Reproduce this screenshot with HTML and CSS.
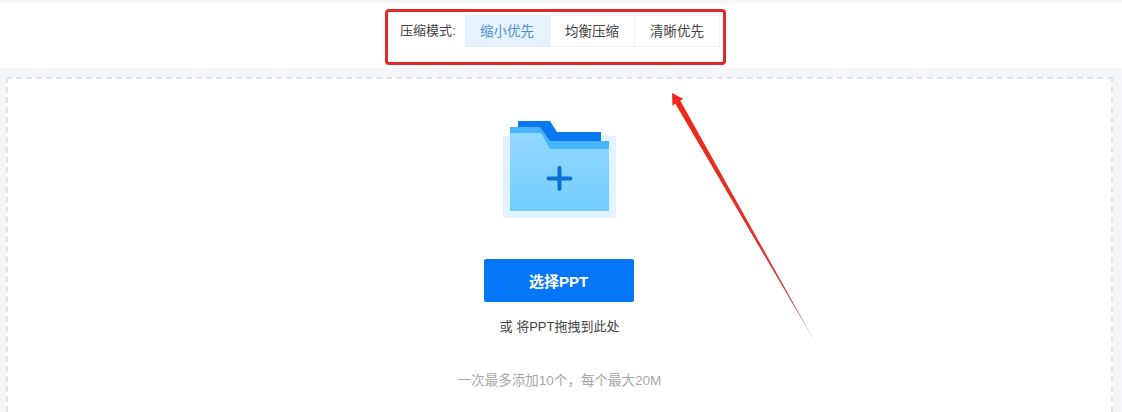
FILE: index.html
```html
<!DOCTYPE html>
<html lang="zh-CN">
<head>
<meta charset="utf-8">
<title>压缩PPT</title>
<link rel="stylesheet" href="styles.css">
</head>
<body>
<div class="page">
  <header class="toolbar">
    <span class="mode-label">压缩模式:</span>
    <div class="tabs">
      <span class="tab active">缩小优先</span>
      <span class="tab">均衡压缩</span>
      <span class="tab">清晰优先</span>
    </div>
  </header>
  <main class="drop">
    <svg class="folder" width="113" height="98" viewBox="0 0 113 98">
      <defs>
        <linearGradient id="front" x1="0" y1="0" x2="0" y2="1">
          <stop offset="0" stop-color="#93d8ff"/>
          <stop offset="1" stop-color="#72cdff"/>
        </linearGradient>
      </defs>
      <rect x="0" y="16" width="113" height="82" fill="#e3f3fd"/>
      <path d="M15 1H47L54 12H98V25H15Z" fill="#0a78ee"/>
      <path d="M7 7H37L47 21H106V40H7Z" fill="#46b5fb"/>
      <path d="M7 13H38L47 29H106V91H7Z" fill="url(#front)"/>
      <path d="M56.500 48V69M45.500 58.500H67.500" stroke="#0b6fd6" stroke-width="4" stroke-linecap="round" fill="none"/>
    </svg>
    <button class="pick" type="button">选择PPT</button>
    <p class="or">或 将PPT拖拽到此处</p>
    <p class="hint">一次最多添加10个，每个最大20M</p>
  </main>
  <div class="mark-box"></div>
  <svg class="arrow" width="1122" height="412" viewBox="0 0 1122 412">
    <defs>
      <linearGradient id="tail" gradientUnits="userSpaceOnUse" x1="672" y1="93" x2="818" y2="347">
        <stop offset="0" stop-color="#f0281c"/>
        <stop offset="0.6" stop-color="#e0332a"/>
        <stop offset="0.82" stop-color="#b5504f"/>
        <stop offset="1" stop-color="#e8d4d6"/>
      </linearGradient>
    </defs>
    <path d="M672 93L683.500 99L680.200 100.500L818 347L675.200 103.500L672.500 106Z" fill="url(#tail)"/>
  </svg>
</div>
</body>
</html>
```
FILE: styles.css
```css
* {
  box-sizing: border-box;
}
html, body {
  margin: 0;
  padding: 0;
}
body {
  width: 1122px;
  height: 412px;
  overflow: hidden;
  background: #f4f6f9;
  font-family: "Liberation Sans", "Noto Sans CJK SC", sans-serif;
}
.page {
  position: relative;
  width: 1122px;
  height: 412px;
  overflow: hidden;
  padding-top: 3px;
}
.toolbar {
  height: 65px;
  background: #fff;
  display: flex;
  align-items: flex-start;
  padding: 12px 0 0 400px;
}
.mode-label {
  width: 65px;
  line-height: 32px;
  font-size: 13px;
  color: #444;
}
.tabs {
  display: flex;
}
.tab {
  width: 85px;
  height: 32px;
  line-height: 31px;
  text-align: center;
  font-size: 13.5px;
  color: #444;
  background: #fff;
  border: 1px solid #f0f2f5;
  border-left: 0;
}
.tab.active {
  color: #4a90d2;
  background: #e6f2fd;
  border-color: #e3edf7;
}
.drop {
  margin: 9px 9px 0 6px;
  height: 345px;
  background: #fff;
  border: 2px dashed #dce5f0;
  display: flex;
  flex-direction: column;
  align-items: center;
  padding-top: 41px;
}
.folder {
  display: block;
}
.pick {
  margin: 41px 2px 0 0;
  width: 150px;
  height: 43px;
  border: 0;
  border-radius: 2px;
  background: #0677f9;
  color: #fff;
  font: bold 15px "Liberation Sans", "Noto Sans CJK SC", sans-serif;
}
.or {
  margin: 16px 0 0;
  line-height: 18px;
  font-size: 13px;
  color: #444;
}
.hint {
  margin: 36px 0 0;
  line-height: 18px;
  font-size: 13.5px;
  color: #a8a8a8;
}
.mark-box {
  position: absolute;
  left: 385px;
  top: 9px;
  width: 341px;
  height: 56px;
  border: 3px solid #e1282b;
  border-radius: 4px;
}
.arrow {
  position: absolute;
  left: 0;
  top: 0;
}
```
